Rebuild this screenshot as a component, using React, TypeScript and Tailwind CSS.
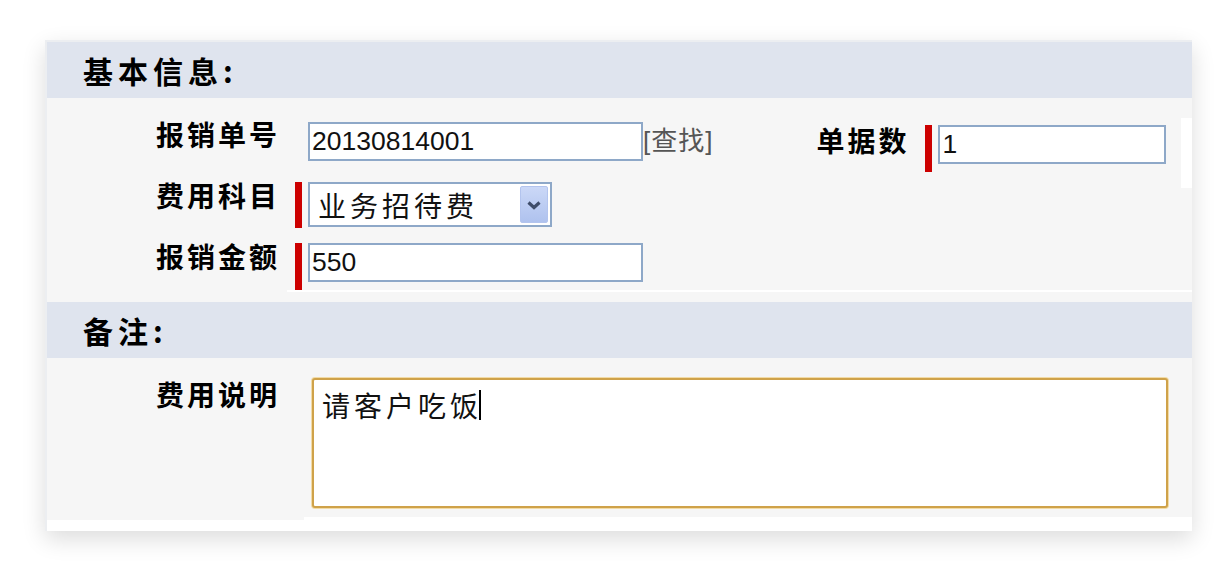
import React from 'react';

const cjk = "font-['Noto_Sans_CJK_SC',sans-serif]";
const latin = "font-['Liberation_Sans','Noto_Sans_CJK_SC',sans-serif]";

function Label({ text, className = '' }: { text: string; className?: string }) {
  return (
    <div
      className={`${cjk} text-[28px] leading-[26px] font-bold tracking-[3px] text-black ${className}`}
    >
      {text}
    </div>
  );
}

function RedBar({ h, show = true }: { h: string; show?: boolean }) {
  return <div className={`w-[7px] shrink-0 ${h} ${show ? 'bg-[#cc0000]' : ''}`} />;
}

function TextBox({ value, w, h }: { value: string; w: string; h: string }) {
  return (
    <div
      className={`${w} ${h} shrink-0 border-2 border-[#8ea8c8] bg-white pl-[2px] flex items-center ${latin} text-[26.5px] leading-none text-[#111]`}
    >
      {value}
    </div>
  );
}

function SectionHeader({ title }: { title: string }) {
  return (
    <div className="h-[56px] bg-[#dfe4ee] flex items-center pl-[36px]">
      <span className={`${cjk} text-[30px] leading-none font-bold tracking-[5px] text-black`}>
        {title}
      </span>
    </div>
  );
}

export default function App() {
  return (
    <div className="w-[1228px] h-[568px] bg-white pt-[40px] pl-[45px] overflow-hidden">
      <div className="w-[1147px] bg-white border-l-2 border-t-2 border-[#eceef1] pb-[11px] shadow-[0_8px_22px_rgba(0,0,0,0.14)]">
        <SectionHeader title="基本信息:" />

        {/* basic info */}
        <div className="bg-[#f6f6f6] pt-[24px]">
          {/* row 1 */}
          <div className="h-[60px] flex items-start">
            <div className="w-[233px] shrink-0 flex justify-end">
              <Label text="报销单号" className="-mt-[1px]" />
            </div>
            <div className="w-[15px] shrink-0" />
            <RedBar h="h-[1px]" show={false} />
            <div className="w-[6px] shrink-0" />
            <TextBox value="20130814001" w="w-[335px]" h="h-[39px]" />
            <div className={`${latin} text-[26px] leading-[39px] tracking-[1px] text-[#555]`}>
              [查找]
            </div>
            <div className="ml-[103px] mt-[5px] flex justify-end">
              <Label text="单据数" />
            </div>
            <div className="w-[16px] shrink-0" />
            <div className="mt-[3px] flex">
              <RedBar h="h-[47px]" />
              <div className="w-[6px] shrink-0" />
              <TextBox value="1" w="w-[228px]" h="h-[39px]" />
            </div>
            <div className="ml-auto -mt-[4px] w-[11px] h-[70px] bg-white" />
          </div>

          {/* row 2 */}
          <div className="h-[61px] flex items-start">
            <div className="w-[233px] shrink-0 flex justify-end">
              <Label text="费用科目" />
            </div>
            <div className="w-[15px] shrink-0" />
            <RedBar h="h-[46px]" />
            <div className="w-[6px] shrink-0" />
            <div className="w-[244px] h-[45px] shrink-0 border-2 border-[#8ea8c8] bg-white flex items-center justify-between">
              <span className={`${cjk} pl-[8px] text-[28px] leading-none tracking-[4px] text-[#111]`}>
                业务招待费
              </span>
              <div className="mr-[2px] w-[28px] h-[37px] rounded-[2px] border border-[#b3c4ee] bg-gradient-to-b from-[#cbd8f7] to-[#afc2ee] flex items-center justify-center">
                <svg width="16" height="10" viewBox="0 0 16 10">
                  <path d="M2.5 2.5 L8 7.5 L13.5 2.5" fill="none" stroke="#3f4d6a" strokeWidth="3.2" />
                </svg>
              </div>
            </div>
          </div>

          {/* row 3 */}
          <div className="h-[47px] flex items-start">
            <div className="w-[233px] shrink-0 flex justify-end">
              <Label text="报销金额" />
            </div>
            <div className="w-[15px] shrink-0" />
            <RedBar h="h-[47px]" />
            <div className="w-[6px] shrink-0" />
            <TextBox value="550" w="w-[335px]" h="h-[39px]" />
          </div>

          <div className="flex h-[12px]">
            <div className="w-[240px] shrink-0" />
            <div className="flex-1 border-t-2 border-white" />
          </div>
        </div>

        <SectionHeader title="备注:" />

        {/* remarks */}
        <div className="flex items-start">
          <div className="w-[257px] h-[162px] shrink-0 bg-[#f6f6f6] pt-[23px] flex justify-end pr-[24px]">
            <Label text="费用说明" />
          </div>
          <div className="flex-1 h-[159px] bg-[#f6f6f6] pt-[20px] pl-[8px]">
            <div className="w-[856px] h-[130px] rounded-[3px] border-2 border-[#cfa24a] shadow-[0_0_0_1px_#f2dba6] bg-white pl-[8px] pt-[11px] flex items-start">
              <span className={`${cjk} text-[28px] leading-[28px] tracking-[4px] text-[#111]`}>
                请客户吃饭
              </span>
              <span className="-ml-[3px] mt-[-1px] w-[2px] h-[30px] bg-black" />
            </div>
          </div>
        </div>
      </div>
    </div>
  );
}
